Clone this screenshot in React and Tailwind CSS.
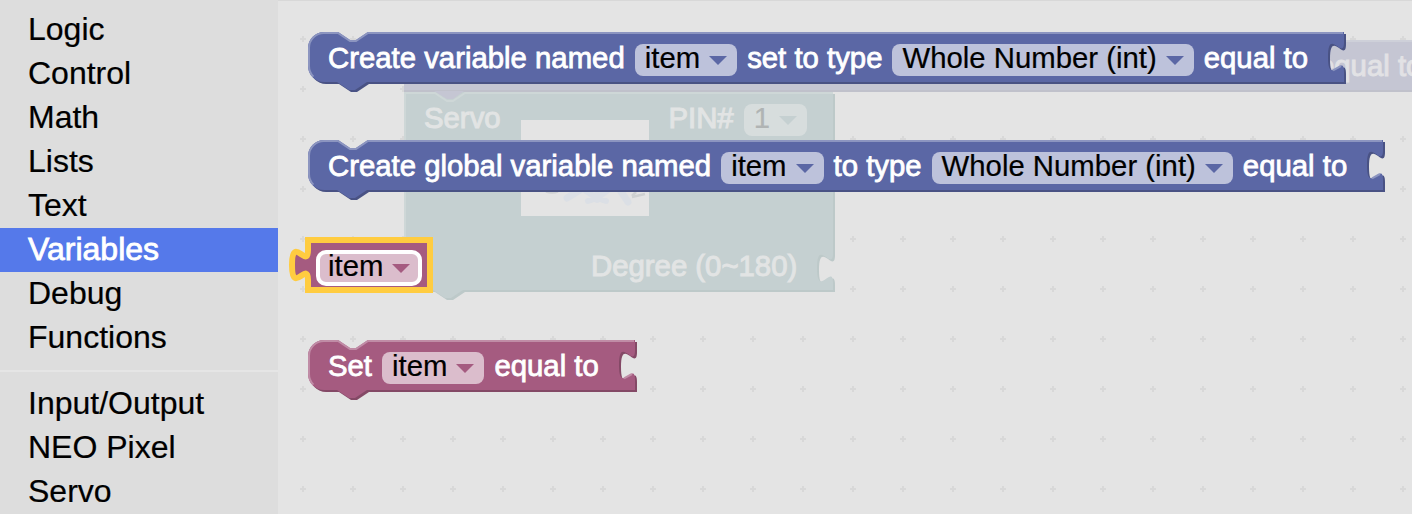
const NAV_TOP = ['Logic', 'Control', 'Math', 'Lists', 'Text', 'Variables', 'Debug', 'Functions'];
const NAV_BOTTOM = ['Input/Output', 'NEO Pixel', 'Servo'];

const NAVY = { fill: '#5b67a5', dark: '#495284', light: '#8c95c0', pill: 'bg-[#bdc2db]' };
const PLUM = { fill: '#a55b80', dark: '#844966', light: '#c08ca6', pill: 'bg-[#dbbdcc]' };

function NavItem({ label }) {
  const active = label === 'Variables';
  return (
    <li
      className={
        active
          ? 'flex h-11 items-center bg-[#5579ea] pb-0.5 pl-7 text-white [-webkit-text-stroke:0.8px_white]'
          : 'flex h-11 items-center pb-0.5 pl-7 text-black [-webkit-text-stroke:0.2px_black]'
      }
    >
      {label}
    </li>
  );
}

function Arrow({ color }) {
  return (
    <svg className="ml-[9px] shrink-0" width="18" height="9" viewBox="0 0 18 9">
      <path d="M0 0H18L9 9Z" fill={color} />
    </svg>
  );
}

function Field({ text, tone, selected }) {
  return (
    <span
      className={`flex h-8 shrink-0 items-center rounded-lg px-[10px] text-black [-webkit-text-stroke:0.2px_black] ${tone.pill} ${selected ? 'outline-[4px] -outline-offset-2 outline-white' : ''}`}
    >
      <span className="pb-1">{text}</span>
      <Arrow color={tone.fill} />
    </span>
  );
}

/* Statement block outline: top notch, bottom bump and a value socket on the right. */
function StatementShape({ width: w, tone }) {
  const body = `M0 16A16 16 0 0 1 16 0H30l12 8h6l12-8H${w}v10c0 20-16-16-16 15s16-5 16 15v10H59l-12 8h-6l-12-8H16A16 16 0 0 1 0 34Z`;
  return (
    <svg className="absolute inset-0 overflow-visible" width={w} height="50" fill="none">
      <path d={body} fill={tone.dark} transform="translate(2 2)" />
      <path d={body} fill={tone.fill} />
      <path
        d={`M5.4 44.6A15 15 0 0 1 1 34V16A15 15 0 0 1 16 1H30l12 8h6l12-8H${w - 1}M${w - 11} 38.4l8-4.4`}
        stroke={tone.light}
        strokeWidth="2"
      />
    </svg>
  );
}

function Statement({ width, tone, children }) {
  return (
    <div className="relative">
      <StatementShape width={width} tone={tone} />
      <div className="relative flex h-14 items-center gap-[10px] whitespace-nowrap pl-5 text-white">{children}</div>
    </div>
  );
}

function Label({ children }) {
  return <span className="pb-1 [-webkit-text-stroke:0.8px_white]">{children}</span>;
}

function Workspace() {
  return (
    <div className="absolute inset-0">
      <svg className="absolute inset-0" width="1134" height="514">
        <defs>
          <pattern id="grid" x="0" y="14" width="50" height="50" patternUnits="userSpaceOnUse">
            <path d="M22 25h6M25 22v6" stroke="#d8d8d8" strokeWidth="2" />
          </pattern>
        </defs>
        <rect width="1134" height="514" fill="url(#grid)" />
        <path d="M0 .5H1134" stroke="#d8d8d8" />
        <path d="M126 40H1134V92H126Z" fill="#c5c6d3" />
        <path d="M126 41H1134" stroke="#ced0d9" strokeWidth="2" />
        <path d="M126 91H1134" stroke="#c0c1cb" strokeWidth="2" />
        <path
          d="M128 94H557V104c0 20-16-16-16 15V255V104ZM128 94H557V255c0 20-16-16-16 15s16-5 16 15V292H187l-12 8h-6l-12-8H126V94Z"
          fill="#bdc9c9"
        />
        <path
          d="M126 92H555V253c0 20-16-16-16 15s16-5 16 15V290H185l-12 8h-6l-12-8H126Z"
          fill="#c5d0d1"
        />
        <path d="M127 290V93H157l12 8h6l12-8H555" stroke="#ced7d7" strokeWidth="2" fill="none" />
        <path d="M156 91H186l-11 8h-6Z" fill="#c5c6d3" />
        <rect x="243" y="120" width="128" height="96" fill="#e4e4e4" />
        <g fill="none" stroke="#dbdfe5" strokeLinecap="round" strokeLinejoin="round">
          <path d="M289 198l13-8M342 190l8 12" strokeWidth="7" />
          <path d="M308 191l11 7 11-8M319 194v6M310 201l9-3 9 3" strokeWidth="6" />
        </g>
        <path d="M268 191.5q6 2 12 0M354 197l13-3M358 192l-4 4" stroke="#cfd1d2" strokeWidth="2.5" fill="none" />
      </svg>
      <div className="absolute left-[146px] top-[100px] flex h-10 w-[383px] items-center text-[#e2e4e4] [-webkit-text-stroke:1px_#e2e4e4]">
        <span className="pb-1">Servo</span>
        <span className="ml-auto mr-[10px] pb-1">PIN#</span>
        <span className="flex h-8 items-center rounded-lg bg-[#d7dddd] px-[10px] text-[#b0b4b4] [-webkit-text-stroke:0.2px_#b0b4b4]">
          <span className="pb-1">1</span>
          <Arrow color="#c5d0d1" />
        </span>
      </div>
      <div className="absolute left-[313px] top-[248px] flex h-9 items-center whitespace-nowrap text-[#e2e4e4] [-webkit-text-stroke:1px_#e2e4e4]">
        Degree (0~180)
      </div>
      <div className="absolute left-[1040px] top-[48px] flex h-9 items-center whitespace-nowrap text-[#e2e2e5] [-webkit-text-stroke:1px_#e2e2e5]">
        equal to
      </div>
    </div>
  );
}

export default function App() {
  return (
    <div className="flex h-[514px] w-[1412px] overflow-hidden bg-[#e4e4e4] font-['Liberation_Sans',Arial,sans-serif]">
      <nav className="w-[278px] shrink-0 bg-[#dddddd] pt-2 text-[32px] leading-none">
        <ul>{NAV_TOP.map((n) => <NavItem key={n} label={n} />)}</ul>
        <div className="my-[10px] h-[2px] bg-[#e5e5e5]" />
        <ul>{NAV_BOTTOM.map((n) => <NavItem key={n} label={n} />)}</ul>
      </nav>
      <main className="relative flex-1 overflow-hidden text-[29.33px] leading-none">
        <Workspace />
        <div className="relative flex flex-col gap-11 pl-[30px] pt-8">
          <div className="pb-2">
            <Statement width={1036} tone={NAVY}>
              <Label>Create variable named</Label>
              <Field text="item" tone={NAVY} />
              <Label>set to type</Label>
              <Field text="Whole Number (int)" tone={NAVY} />
              <Label>equal to</Label>
            </Statement>
          </div>
          <Statement width={1075} tone={NAVY}>
            <Label>Create global variable named</Label>
            <Field text="item" tone={NAVY} />
            <Label>to type</Label>
            <Field text="Whole Number (int)" tone={NAVY} />
            <Label>equal to</Label>
          </Statement>
          <div className="relative">
            <svg className="absolute inset-0 overflow-visible" width="122" height="50">
              <path
                d="M0 0H122V50H0V40c0-20-16 16-16-15s16 5 16-15Z"
                fill="#a55b80"
                stroke="#ffcc40"
                strokeWidth="6"
              />
            </svg>
            <div className="relative flex h-14 items-center pl-[10px]">
              <Field text="item" tone={PLUM} selected />
            </div>
          </div>
          <Statement width={327} tone={PLUM}>
            <Label>Set</Label>
            <Field text="item" tone={PLUM} />
            <Label>equal to</Label>
          </Statement>
        </div>
      </main>
    </div>
  );
}
